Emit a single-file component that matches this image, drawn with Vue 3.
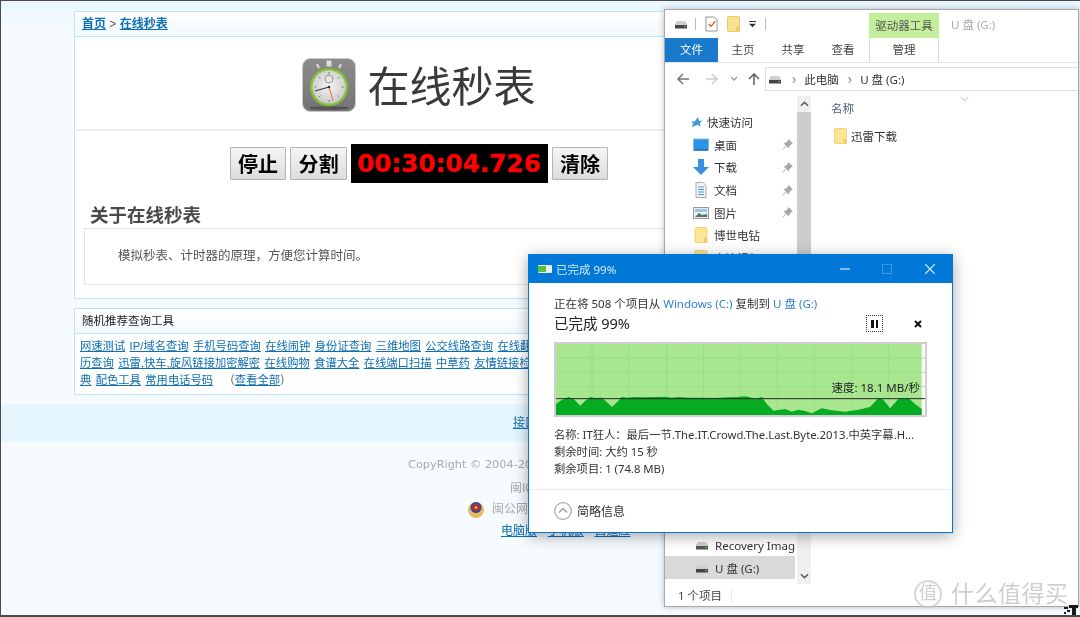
<template>
  <div class="desktop">
    <!-- 背景网页 -->
    <div class="page">
      <div class="panel main-panel">
        <div class="crumb">
          <a>首页</a> <span class="gt">&gt;</span> <a>在线秒表</a>
        </div>
        <div class="title-row">
          <svg class="watch" viewBox="0 0 54 54">
            <defs>
              <linearGradient id="wbg" x1="0" y1="0" x2="0" y2="1">
                <stop offset="0" stop-color="#8c8c8c" />
                <stop offset="1" stop-color="#747474" />
              </linearGradient>
              <radialGradient id="dial" cx="0.5" cy="0.45" r="0.6">
                <stop offset="0" stop-color="#f4f4f4" />
                <stop offset="1" stop-color="#c8c8c8" />
              </radialGradient>
            </defs>
            <rect x="0.5" y="0.5" width="53" height="53" rx="8" fill="url(#wbg)" stroke="#c8c8c8" />
            <ellipse cx="27" cy="50" rx="20" ry="1.800" fill="#525252" />
            <rect x="24.500" y="2.500" width="5" height="6" fill="#ddd" />
            <path d="M15 6l2 4M39 6l-2 4" stroke="#ddd" stroke-width="2" />
            <circle cx="27" cy="29" r="19" fill="#8cc04a" stroke="#7aa93a" />
            <circle cx="27" cy="29" r="16.500" fill="url(#dial)" />
            <circle cx="27" cy="21" r="4" fill="none" stroke="#999" />
            <path d="M27 14v2M27 42v2M12.500 29h2M39.500 29h2M17 19l1.500 1.500M37 19l-1.500 1.500M17 39l1.500-1.500M37 39l-1.500-1.500" stroke="#777" />
            <path d="M27 29L13 33" stroke="#333" />
            <path d="M27 29l4 14" stroke="#ef6a3a" />
            <circle cx="27" cy="29" r="1.300" fill="#333" />
          </svg>
          <h1>在线秒表</h1>
        </div>
        <div class="timer-row">
          <button>停止</button>
          <button>分割</button>
          <div class="timer">00:30:04.726</div>
          <button>清除</button>
        </div>
        <h2>关于在线秒表</h2>
        <div class="about">模拟秒表、计时器的原理，方便您计算时间。</div>
      </div>

      <div class="panel tools-panel">
        <div class="tools-head">随机推荐查询工具</div>
        <div class="tools-body">
          <div v-for="(row, i) in linkRows" :key="i" class="link-row">
            <a v-for="item in row" :key="item">{{ item }}</a>
            <span v-if="i === 2" class="all">（<a>查看全部</a>）</span>
          </div>
        </div>
      </div>

      <div class="band"><a>接口</a></div>

      <div class="foot">
        <p class="copy">CopyRight © 2004-20</p>
        <p class="icp">闽IC</p>
        <p class="police">
          <svg class="badge" viewBox="0 0 18 18">
            <circle cx="9" cy="10" r="8" fill="#eabb5c" />
            <circle cx="9" cy="7.500" r="5.500" fill="#2a4f96" />
            <circle cx="9" cy="7.500" r="3.500" fill="#c9272b" />
            <circle cx="9" cy="7.500" r="1.200" fill="#f2d24e" />
          </svg>
          闽公网安
        </p>
        <p class="device"><a>电脑版</a> · <a>手机版</a> · <a>自适应</a></p>
      </div>
    </div>

    <!-- 资源管理器窗口 -->
    <div class="explorer">
      <div class="qat">
        <div class="qat-icons">
          <svg class="ico16" viewBox="0 0 16 16"><path d="M2 8l2-3h8l2 3v4H2z" fill="#cfcfcf" /><rect x="2" y="9" width="12" height="3.500" fill="#444" /><rect x="11" y="10" width="2" height="1" fill="#4ccb3a" /></svg>
          <i class="sep"></i>
          <svg class="ico16 doc" viewBox="0 0 14 16"><path d="M1 .5h9l3 3v12H1z" fill="#fff" stroke="#8b8b8b" /><path d="M4 8l2.500 2.500L11 5" fill="none" stroke="#e0592a" stroke-width="1.400" /></svg>
          <svg class="ico16 qfold" viewBox="0 0 13 16"><rect x=".5" y=".5" width="12" height="15" rx="1" fill="#fbe18f" stroke="#e8c868" /><rect x="9" y="11" width="3.500" height="4.500" fill="#f0cb69" /></svg>
          <svg class="ico-drop" viewBox="0 0 8 8"><path d="M0 0h8v1H0zM0 3h8L4 7z" fill="#333" /></svg>
          <i class="sep"></i>
        </div>
        <div class="tool-tab">驱动器工具</div>
        <div class="win-title">U 盘 (G:)</div>
      </div>

      <div class="tabs">
        <div class="tab file">文件</div>
        <div v-for="t in tabs" :key="t" class="tab">{{ t }}</div>
        <div class="tab manage">管理</div>
      </div>

      <div class="addr-row">
        <div class="arrows">
          <svg viewBox="0 0 14 14" class="arrow"><path d="M13 7H2M7 2L2 7l5 5" fill="none" stroke="#777" stroke-width="1.500" /></svg>
          <svg viewBox="0 0 14 14" class="arrow fwd"><path d="M1 7h11M7 2l5 5-5 5" fill="none" stroke="#ccc" stroke-width="1.500" /></svg>
          <svg viewBox="0 0 8 6" class="caret"><path d="M1 1l3 3 3-3" fill="none" stroke="#999" stroke-width="1.300" /></svg>
          <svg viewBox="0 0 14 14" class="arrow up"><path d="M7 13V2M2 7l5-5 5 5" fill="none" stroke="#666" stroke-width="1.600" /></svg>
        </div>
        <div class="addr">
          <svg class="ico16" viewBox="0 0 16 16"><path d="M2 8l2-3h8l2 3v4H2z" fill="#cfcfcf" /><rect x="2" y="9" width="12" height="3.500" fill="#444" /><rect x="11" y="10" width="2" height="1" fill="#4ccb3a" /></svg>
          <span class="chev">›</span><span>此电脑</span>
          <span class="chev">›</span><span>U 盘 (G:)</span>
        </div>
      </div>

      <div class="body">
        <div class="nav">
          <div class="nav-top">
            <div class="nav-row quick">
              <svg class="nav-ico star" viewBox="0 0 14 14"><path d="M8.500 1l1.300 4 3.700.2-3 2.400 1 3.900-3.300-2.200L2 12l1.500-4L1 6h4z" fill="#3f9ae0" /></svg>
              <span>快速访问</span>
            </div>
            <div v-for="n in navItems" :key="n.label" class="nav-row">
              <svg v-if="n.icon === 'desk'" class="nav-ico" viewBox="0 0 16 14"><rect x=".5" y="1" width="15" height="11" fill="#2a95e6" stroke="#8ab9da" /><path d="M1 12h14" stroke="#1368b0" stroke-width="1.500" /></svg>
              <svg v-else-if="n.icon === 'down'" class="nav-ico" viewBox="0 0 16 16"><path d="M5 0h6v8h5l-8 8-8-8h5z" fill="#3b8fe0" /></svg>
              <svg v-else-if="n.icon === 'doc'" class="nav-ico" viewBox="0 0 16 16"><path d="M3 .5h7l3 3v12H3z" fill="#f4f4f4" stroke="#aaa" /><path d="M5 5h6M5 7.500h6M5 10h6M5 12.500h6" stroke="#4a9ad8" /></svg>
              <svg v-else-if="n.icon === 'pic'" class="nav-ico" viewBox="0 0 16 14"><rect x=".5" y="1.500" width="15" height="11" fill="#e8eef3" stroke="#999" /><path d="M2 11l4-4 3 2 5-1v3z" fill="#4d7a55" /><rect x="2" y="3" width="12" height="3" fill="#9cc4e4" /></svg>
              <svg v-else class="nav-ico folder" viewBox="0 0 13 16"><rect x=".5" y=".5" width="12" height="15" rx="1" fill="#fce595" stroke="#efd27a" /><rect x="9.500" y="11" width="3" height="4.500" fill="#f0cb69" /></svg>
              <span class="nav-label">{{ n.label }}</span>
              <svg v-if="n.pin" class="pin" viewBox="0 0 12 12"><path d="M7 0l5 5-1.500.5-2.500 2.500-.5 2.500L5 7.700 1 11.500.5 11l3.800-4L1.500 4.500 4 4l2.500-2.500z" fill="#a8a8a8" /></svg>
            </div>
          </div>
          <div class="nav-bottom">
            <div class="nav-row drive">
              <svg class="nav-ico" viewBox="0 0 16 16"><path d="M2 8l2-3h8l2 3v4H2z" fill="#cfcfcf" /><rect x="2" y="9" width="12" height="3.500" fill="#555" /><rect x="11" y="10" width="2" height="1" fill="#4ccb3a" /></svg>
              <span>Recovery Imag</span>
            </div>
            <div class="nav-row drive selected">
              <svg class="nav-ico" viewBox="0 0 16 16"><path d="M2 8l2-3h8l2 3v4H2z" fill="#cfcfcf" /><rect x="2" y="9" width="12" height="3.500" fill="#444" /><rect x="11" y="10" width="2" height="1" fill="#4ccb3a" /></svg>
              <span>U 盘 (G:)</span>
            </div>
          </div>
        </div>
        <div class="scroll">
          <svg class="sb-arrow" viewBox="0 0 10 6"><path d="M1 5l4-4 4 4" fill="none" stroke="#555" stroke-width="1.600" /></svg>
          <div class="thumb"></div>
          <svg class="sb-arrow" viewBox="0 0 10 6"><path d="M1 1l4 4 4-4" fill="none" stroke="#555" stroke-width="1.600" /></svg>
        </div>
        <div class="content">
          <div class="col-head">
            <span>名称</span>
            <svg class="sort" viewBox="0 0 10 6"><path d="M1 1l4 4 4-4" fill="none" stroke="#aaa" /></svg>
          </div>
          <div class="file-row">
            <svg class="file-ico" viewBox="0 0 13 16"><rect x=".5" y=".5" width="12" height="15" rx="1" fill="#fce595" stroke="#efd27a" /><rect x="9.500" y="11" width="3" height="4.500" fill="#f0cb69" /></svg>
            <span>迅雷下载</span>
          </div>
        </div>
      </div>

      <div class="status"><span>1 个项目</span><i class="status-sep"></i></div>
    </div>

    <!-- 复制进度对话框 -->
    <div class="dialog">
      <div class="dlg-title">
        <svg class="dlg-ico" viewBox="0 0 14 10"><rect width="14" height="8" y="1" rx="1" fill="#e8eef3" /><rect x="0" y="2" width="8" height="6" fill="#58c23a" /></svg>
        <span class="dlg-name">已完成 99%</span>
        <svg class="ctl min" viewBox="0 0 10 10"><path d="M0 5h10" stroke="#cfe6fa" stroke-width="1.200" /></svg>
        <svg class="ctl max" viewBox="0 0 10 10"><rect x=".5" y=".5" width="9" height="9" fill="none" stroke="#3d97e0" /></svg>
        <svg class="ctl close" viewBox="0 0 10 10"><path d="M0 0l10 10M10 0L0 10" stroke="#e4f1fc" stroke-width="1.200" /></svg>
      </div>
      <div class="dlg-body">
        <div class="from">正在将 508 个项目从 <span class="blue">Windows (C:)</span> 复制到 <span class="blue">U 盘 (G:)</span></div>
        <div class="progress-row">
          <span class="percent">已完成 99%</span>
          <div class="pause"><i></i><i></i></div>
          <svg class="stop" viewBox="0 0 8 8"><path d="M1 1l6 6M7 1L1 7" stroke="#111" stroke-width="2" /></svg>
        </div>
        <div class="graph">
          <svg class="graph-svg" viewBox="32 25 1108 213" preserveAspectRatio="none">
            <rect x="32" y="25" width="1098" height="213" fill="#a8e68f" />
            <path v-for="x in gridX" :key="x" :d="`M${x} 25V238`" stroke="#97e08a" stroke-width="3" />
            <path v-for="y in gridY" :key="y" :d="`M32 ${y}H1140`" stroke="#97e08a" stroke-width="3" />
            <polygon :points="speedPoints" fill="#06ab24" />
            <path d="M32 189H1140" stroke="#262626" stroke-width="3" />
          </svg>
          <span class="speed">速度: 18.1 MB/秒</span>
        </div>
        <div class="details">
          <div>名称: IT狂人：最后一节.The.IT.Crowd.The.Last.Byte.2013.中英字幕.H...</div>
          <div>剩余时间: 大约 15 秒</div>
          <div>剩余项目: 1 (74.8 MB)</div>
        </div>
      </div>
      <div class="dlg-foot">
        <svg class="fold" viewBox="0 0 18 18"><circle cx="9" cy="9" r="8.300" fill="#fff" stroke="#a8a8a8" stroke-width="1.200" /><path d="M5 10.500l4-4 4 4" fill="none" stroke="#999" stroke-width="1.300" /></svg>
        <span>简略信息</span>
      </div>
    </div>

    <div class="watermark">
      <span class="wm-ring">值</span>
      <span class="wm-text">什么值得买</span>
    </div>
    <svg class="glitch" viewBox="0 0 15 10"><path d="M1 2h4v2H1zM6 0h9v3H6zM4 5h3v2H4zM9 3h4v7H9zM1 7h2v2H1z" fill="#1a1a1a" /></svg>
  </div>
</template>

<script setup>
const linkRows = [
  ["网速测试", "IP/域名查询", "手机号码查询", "在线闹钟", "身份证查询", "三维地图", "公交线路查询", "在线翻"],
  ["历查询", "迅雷,快车,旋风链接加密解密", "在线购物", "食谱大全", "在线端口扫描", "中草药", "友情链接检"],
  ["典", "配色工具", "常用电话号码"],
];

const tabs = ["主页", "共享", "查看"];

const navItems = [
  { label: "桌面", icon: "desk", pin: true },
  { label: "下载", icon: "down", pin: true },
  { label: "文档", icon: "doc", pin: true },
  { label: "图片", icon: "pic", pin: true },
  { label: "博世电钻", icon: "folder", pin: false },
  { label: "高清视频", icon: "folder", pin: false },
];

const gridX = [140, 250, 364, 475, 586, 697, 807, 920, 1030];
const gridY = [67, 110, 153];

// 速度曲线，坐标取自 3 倍放大后的图
const speedPoints = [
  [32, 205], [45, 195], [70, 184], [85, 190], [105, 210], [120, 195], [135, 184], [150, 187],
  [170, 186], [185, 200], [200, 214], [215, 200], [230, 184], [245, 186], [260, 185], [275, 184],
  [300, 185], [330, 184], [360, 183], [380, 186], [400, 184], [430, 186], [470, 186], [510, 187],
  [550, 185], [575, 184], [600, 182], [615, 185], [630, 191], [650, 184], [665, 205], [685, 225],
  [720, 220], [740, 228], [760, 222], [780, 226], [800, 233], [830, 218], [860, 224], [900, 228],
  [940, 222], [975, 214], [1000, 187], [1015, 192], [1035, 218], [1060, 190], [1090, 187],
  [1110, 205], [1130, 220], [1130, 238], [32, 238],
].map((p) => p.join(",")).join(" ");
</script>

<style>
html,
body {
  margin: 0;
  overflow: hidden;
}
</style>

<style scoped>
.desktop {
  position: relative;
  width: 1080px;
  height: 617px;
  box-sizing: border-box;
  overflow: hidden;
  background: #f5fbff;
  border-top: 1px solid #4a4a4a;
  border-left: 1px solid #4a4a4a;
  border-bottom: 2px solid #4a4a4a;
  font-family: "Liberation Sans", "Noto Sans CJK SC", sans-serif;
  font-size: 12px;
  color: #333;
  filter: blur(0.45px);
}

p {
  margin: 0;
}

a {
  color: #0e6fb5;
  text-decoration: underline;
}

.page {
  padding-top: 10px;
  background: linear-gradient(#e8f6ff, #f5fbff 30px);
}

.panel {
  margin-left: 73px;
  width: 690px;
  box-sizing: border-box;
  border: 1px solid #bde4fb;
  background: #fff;
}

.crumb {
  height: 24px;
  padding-left: 7px;
  line-height: 24px;
  font-size: 12px;
  font-weight: bold;
  border-bottom: 1px solid #bde4fb;
  background: linear-gradient(#fff, #f1f9ff);
}

.gt {
  color: #555;
  font-weight: normal;
}

.title-row {
  display: flex;
  justify-content: center;
  align-items: center;
  gap: 11px;
  height: 92px;
  border-bottom: 2px solid #eeeeee;
}

.watch {
  width: 54px;
  height: 54px;
  flex: none;
  margin-top: 4px;
}

h1 {
  margin: 0;
  font-size: 42px;
  font-weight: normal;
  color: #3a3a3a;
}

.timer-row {
  display: flex;
  justify-content: center;
  align-items: center;
  gap: 4px;
  height: 39px;
  margin-top: 13px;
}

button {
  width: 56.500px;
  height: 33px;
  padding: 0;
  box-sizing: border-box;
  border: 1px solid #b5b5b5;
  border-radius: 1px;
  background: linear-gradient(#f5f5f5, #dcdcdc);
  color: #000;
  font-family: inherit;
  font-size: 20px;
  font-weight: bold;
}

.timer {
  width: 197px;
  height: 39px;
  background: #000;
  color: #f00;
  font-family: "DejaVu Sans", sans-serif;
  font-size: 24.700px;
  font-weight: bold;
  line-height: 39px;
  text-align: center;
  white-space: nowrap;
  -webkit-text-stroke: 0.5px #f00;
}

h2 {
  margin: 20px 0 0 15px;
  font-size: 18.500px;
  line-height: 25px;
  color: #4a4a4a;
}

.about {
  height: 57px;
  box-sizing: border-box;
  margin: 0 9px 13px;
  padding-left: 33px;
  border: 1px solid #e2e2e2;
  font-size: 12.500px;
  line-height: 54px;
  color: #555;
}

.tools-panel {
  margin-top: 9px;
  height: 87px;
}

.tools-head {
  height: 24px;
  padding-left: 7px;
  line-height: 24px;
  font-size: 11.500px;
  color: #222;
  border-bottom: 1px solid #bde4fb;
  background: linear-gradient(#fff, #f1f9ff);
}

.tools-body {
  padding: 4px 0 0 5px;
}

.link-row {
  display: flex;
  gap: 4.400px;
  height: 17px;
  line-height: 17px;
  font-size: 11.300px;
  white-space: nowrap;
}

.all {
  margin-left: 6px;
  color: #555;
}

.band {
  height: 38px;
  margin-top: 9px;
  background: #e6f6ff;
  padding-left: 512px;
  line-height: 38px;
}

.foot {
  margin-top: 15px;
  padding-left: 407px;
  color: #aaa;
  white-space: nowrap;
}

.copy {
  height: 16px;
  line-height: 16px;
  font-family: "DejaVu Sans", "Noto Sans CJK SC", sans-serif;
  font-size: 11.300px;
}

.icp {
  margin-top: 7px;
  padding-left: 102px;
  line-height: 16px;
}

.police {
  display: flex;
  align-items: center;
  gap: 7px;
  margin-top: 4px;
  margin-left: 59px;
  line-height: 18px;
}

.badge {
  width: 18px;
  height: 18px;
}

.device {
  margin-top: 5px;
  padding-left: 93px;
  line-height: 16px;
}

.explorer {
  position: absolute;
  left: 663px;
  top: 8px;
  width: 415px;
  height: 598px;
  box-sizing: border-box;
  display: flex;
  flex-direction: column;
  background: #fff;
  border: 1px solid #a8a8a8;
  box-shadow: 0 0 6px rgba(0, 0, 0, 0.25);
  font-family: "Noto Sans", "Noto Sans CJK SC", sans-serif;
  font-size: 11.500px;
  color: #333;
}

.qat {
  display: flex;
  align-items: center;
  height: 28px;
  flex: none;
}

.qat-icons {
  display: flex;
  align-items: center;
  width: 204px;
  padding-left: 8px;
  box-sizing: border-box;
}

.ico16 {
  width: 16px;
  height: 16px;
  flex: none;
}

.sep {
  width: 1px;
  height: 12px;
  margin: 0 9px 0 6px;
  background: #bbb;
}

.doc {
  width: 13px;
}

.qfold {
  width: 13px;
  margin-left: 9px;
}

.ico-drop {
  width: 7px;
  height: 7px;
  margin: 0 0 0 9px;
}

.qat .sep:last-child {
  margin-left: 9px;
}

.tool-tab {
  align-self: flex-end;
  width: 70px;
  height: 25px;
  line-height: 26px;
  text-align: center;
  background: #c3ee9c;
  color: #555;
}

.win-title {
  margin-left: 12px;
  color: #aaa;
}

.tabs {
  display: flex;
  align-items: stretch;
  height: 24px;
  flex: none;
  border-bottom: 1px solid #e4e4e4;
  line-height: 23px;
}

.tab {
  width: 50px;
  text-align: center;
  color: #444;
}

.tab.file {
  width: 53px;
  background: #1979ca;
  color: #fff;
}

.tab.manage {
  width: 70px;
  margin-left: 1px;
  border-left: 1px solid #dcdcdc;
  border-right: 1px solid #dcdcdc;
  box-sizing: border-box;
}

.addr-row {
  display: flex;
  align-items: center;
  height: 33px;
  flex: none;
  padding-bottom: 2px;
  box-sizing: border-box;
}

.arrows {
  display: flex;
  align-items: center;
  width: 100px;
  padding-left: 11px;
  box-sizing: border-box;
  flex: none;
}

.arrow {
  width: 14px;
  height: 14px;
  flex: none;
}

.fwd {
  margin-left: 15px;
}

.caret {
  width: 8px;
  height: 6px;
  margin-left: 11px;
  flex: none;
}

.up {
  margin-left: 9px;
}

.addr {
  display: flex;
  align-items: center;
  flex: 1;
  height: 22px;
  padding-left: 1px;
  border: 1px solid #dedede;
  border-right: 0;
  color: #333;
}

.chev {
  margin: 0 8px 0 9px;
  color: #888;
  font-size: 14px;
}

.body {
  display: flex;
  flex: 1;
  min-height: 0;
}

.nav {
  display: flex;
  flex-direction: column;
  justify-content: space-between;
  width: 132px;
  flex: none;
  padding: 15px 0 5px;
  box-sizing: border-box;
}

.nav-row {
  display: flex;
  align-items: center;
  height: 22.600px;
  padding-left: 28px;
  position: relative;
}

.nav-row.quick {
  padding-left: 25px;
}

.nav-ico {
  width: 16px;
  height: 16px;
  flex: none;
  margin-right: 5px;
}

.quick .nav-ico {
  width: 13px;
  height: 13px;
  margin-right: 4px;
}

.nav-label {
  flex: 1;
}

.pin {
  width: 11px;
  height: 11px;
  margin-right: 4px;
}

.drive {
  padding-left: 29px;
  white-space: nowrap;
  overflow: hidden;
}

.selected {
  background: #d9d9d9;
  margin-right: 2px;
}

.scroll {
  display: flex;
  flex-direction: column;
  align-items: center;
  width: 14px;
  flex: none;
  background: #f0f0f0;
}

.sb-arrow {
  width: 9px;
  height: 6px;
  margin: 5px 0;
  flex: none;
}

.thumb {
  width: 100%;
  height: 405px;
  background: #cdcdcd;
  margin-bottom: auto;
}

.content {
  flex: 1;
  padding-left: 20px;
}

.col-head {
  display: flex;
  height: 22px;
  line-height: 26px;
  color: #4c607a;
}

.sort {
  width: 9px;
  height: 6px;
  margin: 0 0 0 106px;
}

.file-row {
  display: flex;
  align-items: center;
  gap: 4px;
  height: 18px;
  margin: 9px 0 0 3px;
}

.file-ico {
  width: 13px;
  height: 16px;
}

.status {
  display: flex;
  align-items: center;
  height: 22px;
  flex: none;
  padding-left: 13px;
  color: #444;
}

.status-sep {
  width: 1px;
  height: 13px;
  margin-left: 9px;
  background: #e8e8e8;
}

.dialog {
  position: absolute;
  left: 527px;
  top: 253px;
  width: 425px;
  height: 279px;
  box-sizing: border-box;
  display: flex;
  flex-direction: column;
  background: #fff;
  border: 1px solid #0078d7;
  box-shadow: 0 3px 14px rgba(0, 0, 0, 0.35);
  font-family: "Noto Sans", "Noto Sans CJK SC", sans-serif;
}

.dlg-title {
  display: flex;
  align-items: center;
  height: 28px;
  flex: none;
  padding-left: 9px;
  background: #0078d7;
  color: #d4e9fb;
  font-size: 11.500px;
}

.dlg-ico {
  width: 14px;
  height: 10px;
}

.dlg-name {
  margin-left: 4px;
  flex: 1;
}

.ctl {
  width: 10px;
  height: 10px;
  flex: none;
}

.min {
  margin-right: 32px;
}

.max {
  margin-right: 33px;
}

.close {
  margin-right: 17px;
}

.dlg-body {
  flex: 1;
  padding: 12px 25px 0;
}

.from {
  height: 17px;
  line-height: 17px;
  font-size: 11.500px;
}

.blue {
  color: #2f7fd0;
}

.progress-row {
  display: flex;
  align-items: center;
  height: 22px;
  margin-top: -1px;
}

.percent {
  flex: 1;
  font-size: 14.500px;
  color: #222;
}

.pause {
  display: flex;
  justify-content: center;
  align-items: center;
  gap: 2px;
  width: 17px;
  height: 17px;
  box-sizing: border-box;
  border: 1px dotted #333;
  margin-top: 3px;
}

.pause i {
  width: 2.500px;
  height: 8px;
  background: #111;
}

.stop {
  width: 8px;
  height: 8px;
  margin: 3px 5px 0 31px;
}

.graph {
  position: relative;
  height: 75px;
  margin-top: 9px;
  width: 373px;
  box-sizing: border-box;
  border: 2px solid #cfcfcf;
  background: #fff;
}

.graph-svg {
  display: block;
  width: 100%;
  height: 100%;
}

.speed {
  position: absolute;
  right: 5px;
  top: 36px;
  font-size: 11.500px;
  line-height: 16px;
  color: #222;
}

.details {
  margin-top: 9px;
  font-size: 11.300px;
  line-height: 17px;
  white-space: nowrap;
}

.dlg-foot {
  display: flex;
  align-items: center;
  gap: 5px;
  height: 42px;
  flex: none;
  padding-left: 25px;
  border-top: 1px solid #eaeaea;
  font-size: 12px;
}

.fold {
  width: 18px;
  height: 18px;
}

.watermark {
  position: absolute;
  left: 913px;
  top: 579px;
  display: flex;
  align-items: center;
  gap: 9px;
  color: rgba(180, 180, 180, 0.65);
  text-shadow: 0 0 1px #fff;
}

.wm-ring {
  width: 28px;
  height: 28px;
  box-sizing: border-box;
  border: 2px solid rgba(195, 195, 195, 0.65);
  border-radius: 50%;
  font-size: 18px;
  line-height: 23px;
  text-align: center;
}

.wm-text {
  font-size: 23px;
  letter-spacing: 0.5px;
  line-height: 28px;
  white-space: nowrap;
}

.glitch {
  position: absolute;
  right: 2px;
  bottom: 0;
  width: 15px;
  height: 10px;
}
</style>
